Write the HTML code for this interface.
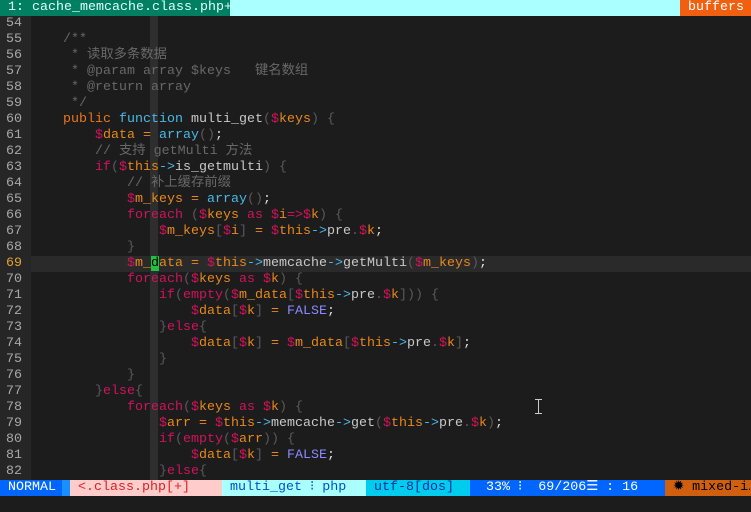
<!DOCTYPE html><html><head><meta charset="utf-8"><style>
body{margin:0;width:751px;height:512px;background:#1c1c1c;overflow:hidden;font-family:"Liberation Mono","Noto Sans CJK SC",monospace;font-size:13.33px;position:relative}
.l{position:absolute;left:0;height:16px;line-height:16px;white-space:pre;width:751px}
.n{display:inline-block;width:31px;background:#262626;color:#a8a8a8;box-sizing:border-box;padding-left:6px}
.c{color:#686868}.p{color:#5a5a5a}.d{color:#d0145a}.v{color:#e8891a}.k{color:#d0145a}.f{color:#4ab8e8}.t{color:#c8c8c8}.o{color:#e8761e}.b{color:#8a8aff}.w{color:#ddd}
.g{position:absolute;left:150px;top:16px;width:8px;height:464px;background:#2e2e2e}
.s{position:absolute;top:0;height:16px;line-height:16px;white-space:pre}
</style></head><body>
<div style="position:absolute;left:0;top:0;width:751px;height:16px;background:#aaffff"></div>
<div style="position:absolute;left:0;top:0;width:230px;height:16px;background:#008060;color:#e0ffff;line-height:16px;white-space:pre"> 1: cache_memcache.class.php+</div>
<div style="position:absolute;left:680px;top:0;width:71px;height:16px;background:#f06010;color:#fff;line-height:16px;white-space:pre"> buffers</div>
<div style="position:absolute;left:31px;top:256px;width:720px;height:16px;background:#2a2a2a"></div>
<div class="g"></div>
<div style="position:absolute;left:0;top:16px;width:31px;height:464px;background:#262626"></div>
<div class="l" style="top:16px"><span class="n">54</span></div>
<div class="l" style="top:32px"><span class="n">55</span><span class="c">    /**</span></div>
<div class="l" style="top:48px"><span class="n">56</span><span class="c">     * 读取多条数据</span></div>
<div class="l" style="top:64px"><span class="n">57</span><span class="c">     * @param array $keys   键名数组</span></div>
<div class="l" style="top:80px"><span class="n">58</span><span class="c">     * @return array</span></div>
<div class="l" style="top:96px"><span class="n">59</span><span class="c">     */</span></div>
<div class="l" style="top:112px"><span class="n">60</span>    <span class="o">public</span> <span class="f">function</span> <span class="t">multi_get</span><span class="p">(</span><span class="d">$</span><span class="v">keys</span><span class="p">)</span> <span class="p">{</span></div>
<div class="l" style="top:128px"><span class="n">61</span>        <span class="d">$</span><span class="v">data = </span><span class="f">array</span><span class="p">()</span><span class="w">;</span></div>
<div class="l" style="top:144px"><span class="n">62</span><span class="c">        // 支持 getMulti 方法</span></div>
<div class="l" style="top:160px"><span class="n">63</span>        <span class="k">if</span><span class="p">(</span><span class="d">$</span><span class="v">this</span><span class="f">-&gt;</span><span class="t">is_getmulti</span><span class="p">) {</span></div>
<div class="l" style="top:176px"><span class="n">64</span><span class="c">            // 补上缓存前缀</span></div>
<div class="l" style="top:192px"><span class="n">65</span>            <span class="d">$</span><span class="v">m_keys = </span><span class="f">array</span><span class="p">()</span><span class="w">;</span></div>
<div class="l" style="top:208px"><span class="n">66</span>            <span class="k">foreach</span> <span class="p">(</span><span class="d">$</span><span class="v">keys</span> <span class="k">as</span> <span class="d">$</span><span class="v">i</span><span class="d">=&gt;$</span><span class="v">k</span><span class="p">) {</span></div>
<div class="l" style="top:224px"><span class="n">67</span>                <span class="d">$</span><span class="v">m_keys</span><span class="p">[</span><span class="d">$</span><span class="v">i</span><span class="p">]</span> <span class="v">=</span> <span class="d">$</span><span class="v">this</span><span class="f">-&gt;</span><span class="t">pre</span><span class="p">.</span><span class="d">$</span><span class="v">k</span><span class="w">;</span></div>
<div class="l" style="top:240px"><span class="n">68</span><span class="p">            }</span></div>
<div class="l" style="top:256px"><span class="n" style="color:#e8a030">69</span>            <span class="d">$</span><span class="v">m_<span style="background:#20c040;color:#000">d</span>ata = </span><span class="d">$</span><span class="v">this</span><span class="f">-&gt;</span><span class="t">memcache</span><span class="f">-&gt;</span><span class="t">getMulti</span><span class="p">(</span><span class="d">$</span><span class="v">m_keys</span><span class="p">)</span><span class="w">;</span></div>
<div class="l" style="top:272px"><span class="n">70</span>            <span class="k">foreach</span><span class="p">(</span><span class="d">$</span><span class="v">keys</span> <span class="k">as</span> <span class="d">$</span><span class="v">k</span><span class="p">) {</span></div>
<div class="l" style="top:288px"><span class="n">71</span>                <span class="k">if</span><span class="p">(</span><span class="k">empty</span><span class="p">(</span><span class="d">$</span><span class="v">m_data</span><span class="p">[</span><span class="d">$</span><span class="v">this</span><span class="f">-&gt;</span><span class="t">pre</span><span class="p">.</span><span class="d">$</span><span class="v">k</span><span class="p">])) {</span></div>
<div class="l" style="top:304px"><span class="n">72</span>                    <span class="d">$</span><span class="v">data</span><span class="p">[</span><span class="d">$</span><span class="v">k</span><span class="p">]</span> <span class="v">=</span> <span class="b">FALSE</span><span class="w">;</span></div>
<div class="l" style="top:320px"><span class="n">73</span><span class="p">                }</span><span class="k">else</span><span class="p">{</span></div>
<div class="l" style="top:336px"><span class="n">74</span>                    <span class="d">$</span><span class="v">data</span><span class="p">[</span><span class="d">$</span><span class="v">k</span><span class="p">]</span> <span class="v">=</span> <span class="d">$</span><span class="v">m_data</span><span class="p">[</span><span class="d">$</span><span class="v">this</span><span class="f">-&gt;</span><span class="t">pre</span><span class="p">.</span><span class="d">$</span><span class="v">k</span><span class="p">]</span><span class="w">;</span></div>
<div class="l" style="top:352px"><span class="n">75</span><span class="p">                }</span></div>
<div class="l" style="top:368px"><span class="n">76</span><span class="p">            }</span></div>
<div class="l" style="top:384px"><span class="n">77</span><span class="p">        }</span><span class="k">else</span><span class="p">{</span></div>
<div class="l" style="top:400px"><span class="n">78</span>            <span class="k">foreach</span><span class="p">(</span><span class="d">$</span><span class="v">keys</span> <span class="k">as</span> <span class="d">$</span><span class="v">k</span><span class="p">) {</span></div>
<div class="l" style="top:416px"><span class="n">79</span>                <span class="d">$</span><span class="v">arr = </span><span class="d">$</span><span class="v">this</span><span class="f">-&gt;</span><span class="t">memcache</span><span class="f">-&gt;</span><span class="t">get</span><span class="p">(</span><span class="d">$</span><span class="v">this</span><span class="f">-&gt;</span><span class="t">pre</span><span class="p">.</span><span class="d">$</span><span class="v">k</span><span class="p">)</span><span class="w">;</span></div>
<div class="l" style="top:432px"><span class="n">80</span>                <span class="k">if</span><span class="p">(</span><span class="k">empty</span><span class="p">(</span><span class="d">$</span><span class="v">arr</span><span class="p">)) {</span></div>
<div class="l" style="top:448px"><span class="n">81</span>                    <span class="d">$</span><span class="v">data</span><span class="p">[</span><span class="d">$</span><span class="v">k</span><span class="p">]</span> <span class="v">=</span> <span class="b">FALSE</span><span class="w">;</span></div>
<div class="l" style="top:464px"><span class="n">82</span><span class="p">                }</span><span class="k">else</span><span class="p">{</span></div>
<div style="position:absolute;left:538px;top:399px;width:1px;height:15px;background:#ccc"></div>
<div style="position:absolute;left:535px;top:399px;width:7px;height:1px;background:#ccc"></div>
<div style="position:absolute;left:535px;top:413px;width:7px;height:1px;background:#ccc"></div>
<div style="position:absolute;top:480px;left:0;width:751px;height:16px;">
<span class="s" style="left:0;width:62px;background:#0066ff;color:#fff"> NORMAL</span>
<span class="s" style="left:62px;width:8px;background:#1890ff"></span>
<span class="s" style="left:70px;width:152px;background:#ffcccc;color:#e02020"> &lt;.class.php[+]</span>
<span class="s" style="left:222px;width:144px;background:#aaffff;color:#0050d0"> multi_get ⁝ php</span>
<span class="s" style="left:366px;width:104px;background:#00ccee;color:#0030a0"> utf-8[dos]</span>
<span class="s" style="left:470px;width:195px;background:#0066ff;color:#fff">  33% ⁝  69/206☰ : 16</span>
<span class="s" style="left:665px;width:86px;background:#d06010;color:#000"> ✹ mixed-i…</span>
</div>
</body></html>
